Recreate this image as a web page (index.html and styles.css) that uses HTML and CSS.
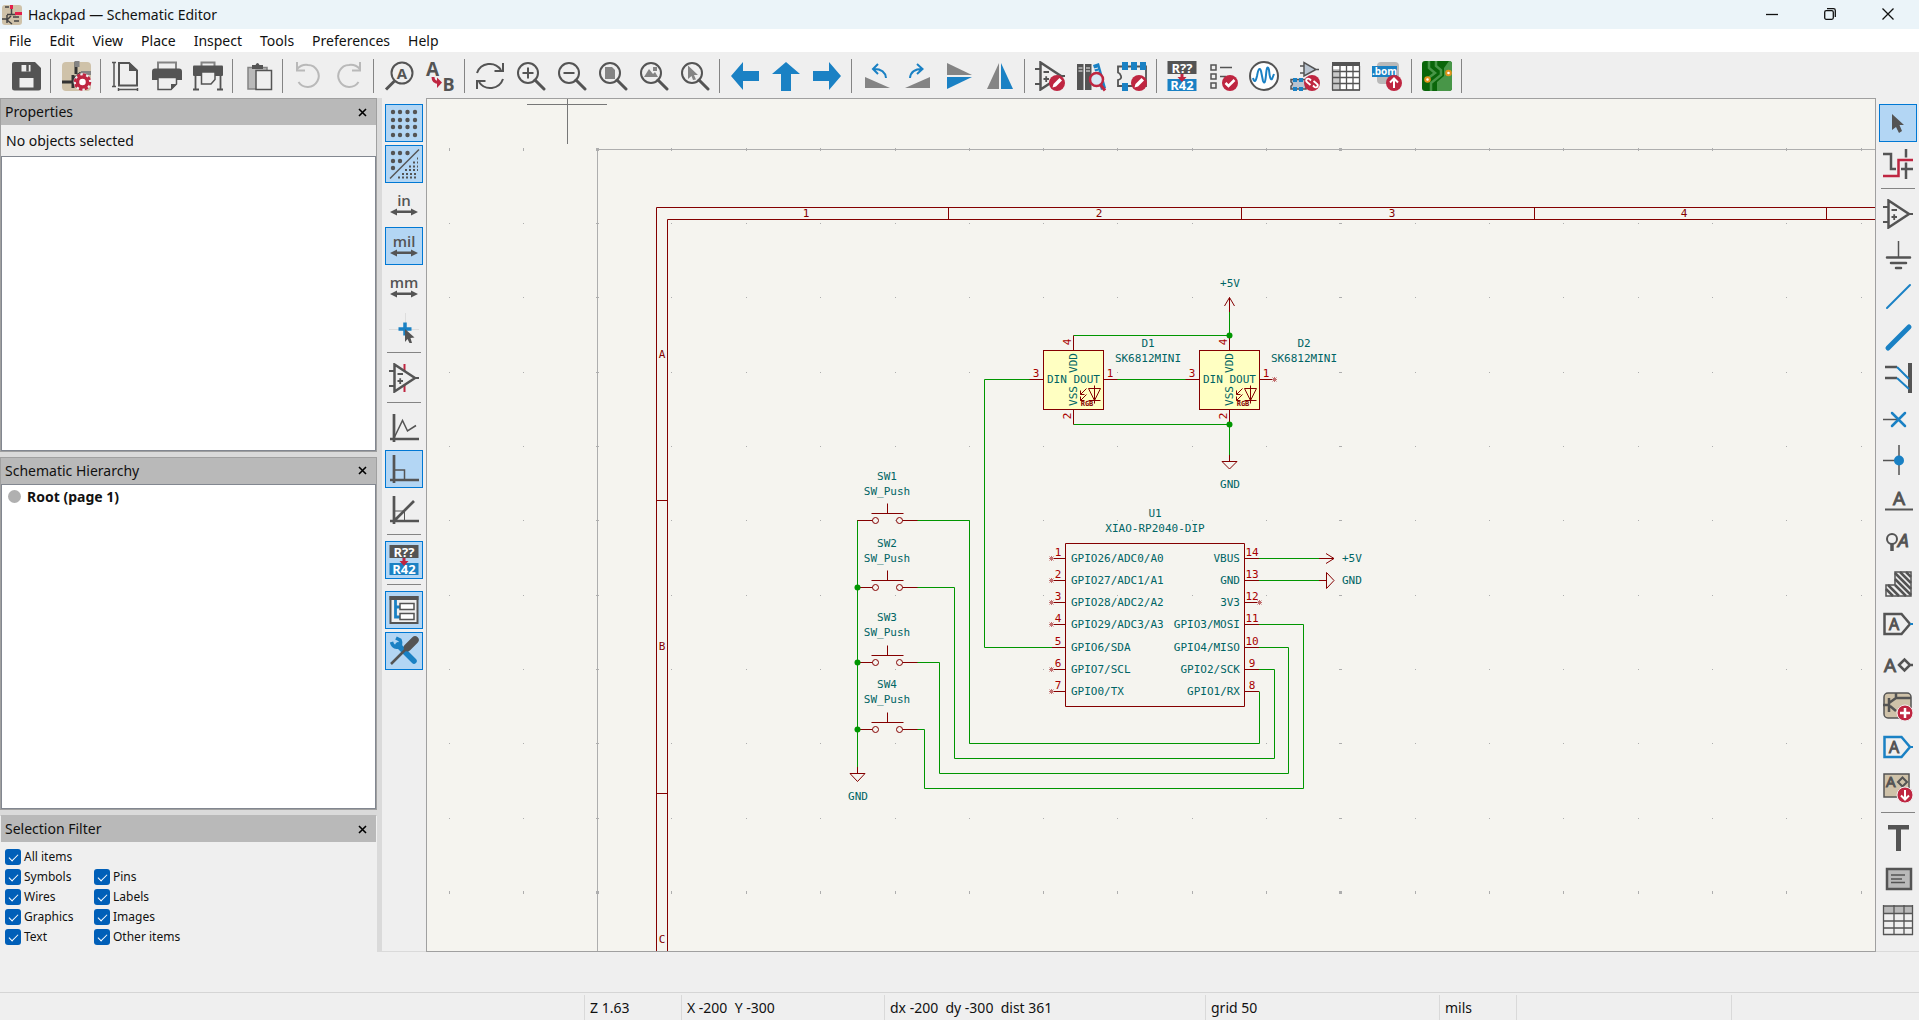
FILE: index.html
```html
<!DOCTYPE html>
<html lang="en">
<head>
<meta charset="utf-8">
<title>Hackpad — Schematic Editor</title>
<link rel="stylesheet" href="styles.css">
</head>
<body>
<svg class="sprite" aria-hidden="true">
  <symbol id="lens" viewBox="0 0 30 30"><circle cx="12" cy="12" r="10"/><path d="M19 19L28 28" stroke-width="3" stroke-linecap="round"/></symbol>
  <symbol id="opamp" viewBox="0 0 30 30"><path d="M5.500 1.500V28.500L26 15Z" stroke-width="2.500"/><path d="M0 8H5M0 23H5M26 15H30M8.500 11H14M8.500 18H14M11.200 15.200V21" stroke-width="1.800"/></symbol>
  <symbol id="pencil" viewBox="0 0 30 30"><circle class="fr" cx="22" cy="22" r="8"/><path class="w" d="M17.500 26.500l1-3.500 6-6 2.500 2.500-6 6Z"/></symbol>
  <symbol id="arrows" viewBox="0 0 30 30"><path class="f" d="M1 22L8 18.500v2h14v-2l7 3.500L22 25.500v-2.500H8V25.500Z"/></symbol>
  <symbol id="flag" viewBox="0 0 30 30"><path d="M1.500 5H18.500L27 15L18.500 25H1.500Z" stroke-width="2.500"/></symbol>
</svg>
<div class="window">
  <header class="titlebar">
    <svg class="appicon" viewBox="0 0 20 20"><rect width="20" height="20" rx="3" fill="#cfc2a9"/><path d="M9.500 4v5M5 9.500h9M5 10v8M0 14h5M9 11l-4 4 5 4" stroke="#444" stroke-width="1.500" fill="none"/><path d="M3 2h4M11 12h6M12 16h5" stroke="#444" stroke-width="1.500"/><path d="M9.500 0v4M13 8.500h7" stroke="#e3204b" stroke-width="3"/></svg>
    <h1 class="title">Hackpad — Schematic Editor</h1>
    <div class="winbtns">
      <button aria-label="Minimize"><svg viewBox="0 0 12 12"><path d="M0 6.500H12"/></svg></button>
      <button aria-label="Restore"><svg viewBox="0 0 12 12"><path d="M3 .700H9.500Q11.300.700 11.300 2.500V9"/><rect x=".700" y="2.700" width="8.600" height="8.600" rx="1.500"/></svg></button>
      <button aria-label="Close"><svg viewBox="0 0 12 12"><path d="M.500.500l11 11M11.500.500l-11 11"/></svg></button>
    </div>
  </header>
  <nav class="menubar">
    <button>File</button><button>Edit</button><button>View</button><button>Place</button><button>Inspect</button><button>Tools</button><button>Preferences</button><button>Help</button>
  </nav>
  <div class="toolbar" role="toolbar">
    <button class="tool" aria-label="Save"><svg class="icon" viewBox="0 0 30 30"><path class="f" d="M3 1H24L30 7V27Q30 29.500 27.500 29.500H3.500Q1 29.500 1 27V3Q1 1 3 1Z"/><rect x="7.500" y="16" width="16" height="11.500" fill="#efefef"/><rect x="9.500" y="3" width="11" height="8.500" fill="#efefef"/><path d="M16.500 4v6.500" stroke-width="2.500"/></svg></button>
    <span class="sep"></span>
    <button class="tool" aria-label="Schematic setup"><svg class="icon" viewBox="0 0 30 30"><rect x="1" y="1" width="29" height="29" rx="4" fill="#cfc2a9" stroke="none"/><path d="M15 1v12M1 21h12M12 14v13M13 18l7-6" stroke-width="3" stroke="#333"/><path d="M20 12h10" stroke-width="4" stroke="#848484"/><path d="M16 0v6" stroke-width="5" stroke="#848484"/><circle cx="21.500" cy="21" r="6.500" stroke="#efefef" stroke-width="5"/><circle cx="21.500" cy="21" r="7.500" stroke="#bf2641" stroke-width="2.500" stroke-dasharray="3.500 2.390"/><circle cx="21.500" cy="21" r="5" stroke="#bf2641" stroke-width="3.500" fill="#fff"/></svg></button>
    <span class="sep"></span>
    <button class="tool" aria-label="Page settings"><svg class="icon" viewBox="0 0 30 30"><path d="M8 2H18L26 9.500V24.500H8Z"/><path d="M18 1V10H27Z" class="f"/><path d="M3 2V25M1 1.500H5M1 25.500H5M8 28.500H26M7.500 27V30M26.500 27V30" stroke-width="1.500"/></svg></button>
    <button class="tool" aria-label="Print"><svg class="icon" viewBox="0 0 30 30"><path d="M6 8V1.500H24V8" stroke="#848484"/><path class="f" d="M3 7.500H27Q30 7.500 30 10.500V19H0V10.500Q0 7.500 3 7.500Z"/><path d="M6 16.500H24.500V23L19 28.500H6Z" fill="#efefef" stroke-width="1.500"/><path class="f" d="M19 29V23H25Z"/></svg></button>
    <button class="tool" aria-label="Plot"><svg class="icon" viewBox="0 0 30 30"><path d="M8.500 5V1.500H21.500V5" stroke="#848484"/><rect class="f" y="4.500" width="30" height="10.500" rx="1"/><path d="M8.500 11H22V18.500L18 23H8.500Z" fill="#efefef" stroke-width="1.500"/><path d="M2.500 14V28M27.500 14V28M0 28.500H6M24 28.500H30" stroke-width="1.800"/></svg></button>
    <span class="sep"></span>
    <button class="tool" aria-label="Paste"><svg class="icon" viewBox="0 0 30 30"><path d="M5 6.500H24V28H5Z" fill="#b9b9b9" stroke="#848484" stroke-width="1.500"/><path class="f" d="M9 8V4H12.500Q14.500 0 16.500 4H20V8Z"/><path d="M13 9.500H28.500V28.500H13Z" fill="#efefef" stroke-width="1.500"/></svg></button>
    <span class="sep"></span>
    <button class="tool" aria-label="Undo"><svg class="icon dim" viewBox="0 0 30 30"><path d="M4 1V9.500H12M4 8Q9 3 15 4A11 11 0 1 1 5.500 21"/></svg></button>
    <button class="tool" aria-label="Redo"><svg class="icon dim" viewBox="0 0 30 30"><path d="M26 1V9.500H18M26 8Q21 3 15 4A11 11 0 1 0 24.500 21"/></svg></button>
    <span class="sep"></span>
    <button class="tool" aria-label="Find"><svg class="icon" viewBox="0 0 30 30"><circle cx="18" cy="12" r="10.500"/><path d="M10.500 20L2 28.500" stroke-width="3"/><text class="ft" x="18" y="17.500" font-size="15" text-anchor="middle">A</text></svg></button>
    <button class="tool" aria-label="Find and replace"><svg class="icon" viewBox="0 0 30 30"><text class="ft" x="1" y="15" font-size="19">A</text><text class="ft" x="17.500" y="29.500" font-size="18">B</text><path d="M8 16Q8 21.500 14 21.500" stroke="#bf2641" stroke-width="3"/><path class="fr" d="M12 16.500L17 21.500L12 27Z"/></svg></button>
    <span class="sep"></span>
    <button class="tool" aria-label="Refresh"><svg class="icon" viewBox="0 0 30 30"><path d="M2 12A13.500 13.500 0 0 1 26 9M28 2V10H19.500M28 18A13.500 13.500 0 0 1 4 21M2 28V20H10.500"/></svg></button>
    <button class="tool" aria-label="Zoom in"><svg class="icon" viewBox="0 0 30 30"><use href="#lens"/><path d="M12 6.500V17.500M6.500 12H17.500"/></svg></button>
    <button class="tool" aria-label="Zoom out"><svg class="icon" viewBox="0 0 30 30"><use href="#lens"/><path d="M6.500 12H17.500"/></svg></button>
    <button class="tool" aria-label="Zoom to fit"><svg class="icon" viewBox="0 0 30 30"><use href="#lens"/><path class="fg" d="M7 6H14L17 9V18H7Z"/></svg></button>
    <button class="tool" aria-label="Zoom to objects"><svg class="icon" viewBox="0 0 30 30"><use href="#lens"/><path class="fg" d="M5 16L10 8L14 13L16 11L19 16ZM14 6h4v4h-4Z"/></svg></button>
    <button class="tool" aria-label="Zoom to selection"><svg class="icon" viewBox="0 0 30 30"><use href="#lens"/><path class="fg" d="M8 4.500L18 14H14L16 18.500L13 19L11.500 15L8 18Z"/></svg></button>
    <span class="sep"></span>
    <button class="tool" aria-label="Back"><svg class="icon" viewBox="0 0 30 30"><path class="fb" d="M1 15L13 1V10H29V20H13V29Z"/></svg></button>
    <button class="tool" aria-label="Up"><svg class="icon" viewBox="0 0 30 30"><path class="fb" d="M15 1L29 13H20V30H10V13H1Z"/></svg></button>
    <button class="tool" aria-label="Forward"><svg class="icon" viewBox="0 0 30 30"><path class="fb" d="M29 15L17 1V10H1V20H17V29Z"/></svg></button>
    <span class="sep"></span>
    <button class="tool" aria-label="Rotate left"><svg class="icon" viewBox="0 0 30 30"><path class="fg" d="M3 16L28 27H3Z"/><path class="sb" d="M24 17Q23 8 12 8M16 3L11 8L16 13"/></svg></button>
    <button class="tool" aria-label="Rotate right"><svg class="icon" viewBox="0 0 30 30"><path class="fg" d="M27 16L2 27H27Z"/><path class="sb" d="M7 17Q8 8 19 8M14 3L19.500 8L14 13"/></svg></button>
    <button class="tool" aria-label="Mirror vertically"><svg class="icon" viewBox="0 0 30 30"><path class="fg" d="M3 2L28 14H3Z"/><path class="fb" d="M3 28L28 16H3Z"/></svg></button>
    <button class="tool" aria-label="Mirror horizontally"><svg class="icon" viewBox="0 0 30 30"><path class="fg" d="M2 28L14 2V28Z"/><path class="fb" d="M28 28L16 2V28Z"/></svg></button>
    <span class="sep"></span>
    <button class="tool" aria-label="Symbol editor"><svg class="icon" viewBox="0 0 30 30"><use href="#opamp"/><use href="#pencil"/></svg></button>
    <button class="tool" aria-label="Symbol library browser"><svg class="icon" viewBox="0 0 30 30"><path class="f" d="M1 3H7.500V29H1ZM9 3H15.500V29H9Z"/><path d="M2.500 7h4M2.500 10h4M10 7h4M10 10h4" stroke="#efefef" stroke-width="1"/><path class="fb" d="M17 4L23 2L30 27L25 29Z"/><path d="M18 8l4-1M19 11l4-1" stroke="#efefef" stroke-width="1"/><path d="M24 23L29 29.500" stroke="#bf2641" stroke-width="3"/><circle cx="20.500" cy="18.500" r="6.500" stroke="#bf2641" stroke-width="2.500" fill="#d8e8f4"/></svg></button>
    <button class="tool" aria-label="Footprint editor"><svg class="icon" viewBox="0 0 30 30"><path d="M1 5.500H29V25H1V19Q5 18 4 15Q3 12 1 11.500Z" stroke-width="1.800"/><path class="fb" d="M5 1h6v8H5ZM14 1h6v8h-6ZM23 1h6v8h-6ZM5 22h6v8H5Z"/><use href="#pencil"/></svg></button>
    <span class="sep"></span>
    <button class="tool" aria-label="Annotate"><svg class="icon" viewBox="0 0 30 30"><rect class="f" width="29" height="13" x="0.500"/><rect class="fb" x="0.500" y="18" width="29" height="12"/><text class="w" x="15" y="11.500" font-size="13" text-anchor="middle">R??</text><text class="w" x="15" y="29" font-size="13" text-anchor="middle">R42</text><path class="fr" d="M13.500 13h3v3h3L15 21L10.500 16h3Z"/></svg></button>
    <button class="tool" aria-label="Rules checker"><svg class="icon" viewBox="0 0 30 30"><path d="M3 4h5v5H3ZM3 13h5v5H3ZM3 22h5v5H3ZM12 6.500H24M12 15.500H18" stroke-width="1.500"/><circle class="fr" cx="22" cy="22" r="8"/><path d="M17.500 22l3 3 6-6" stroke="#fff" stroke-width="2.500"/></svg></button>
    <button class="tool" aria-label="Simulator"><svg class="icon" viewBox="0 0 30 30"><circle cx="15" cy="15" r="14" fill="#fff"/><path class="sb" d="M4 17Q6 24 8 15Q10 4 12 10L14 20Q16 25 17 14Q18 2 20 9Q21 20 23 18L25 13" /></svg></button>
    <button class="tool" aria-label="Assign footprints"><svg class="icon" viewBox="0 0 30 30"><path d="M14 1.500V15L26 8.500ZM10 5H14M10 12H14M26 8.500H29" fill="#b9c4d0" stroke-width="1.500"/><path d="M1 18.500H16V28H1V25Q4 23 1 21Z" fill="#b9c4d0" stroke-width="1.500"/><path class="fb" d="M3 17h4v4H3ZM9 17h4v4H9ZM3 26h4v4H3ZM9 26h4v4H9Z"/><circle class="fr" cx="22" cy="22" r="8"/><path d="M21 19.500l-1.500-1.500q-2-1-3 .500t1 3l3 2.500M23 24.500l1.500 1.500q2 1 3-.500t-1-3l-3-2.500" stroke="#fff" stroke-width="1.800"/></svg></button>
    <button class="tool" aria-label="Symbol fields table"><svg class="icon" viewBox="0 0 30 30"><rect x="1.500" y="2" width="27" height="27" fill="#fff" stroke-width="1"/><path d="M2 8V29H9V8Z" fill="#c9c9c9" stroke="none"/><path class="f" d="M1 1H29V5H1Z"/><path d="M1 10.500H29M1 16.500H29M1 22.500H29M1.500 5V29M9 5V29M15.500 5V29M22 5V29M28.500 5V29M1 29H29" stroke-width="1.300"/></svg></button>
    <button class="tool" aria-label="Bill of materials"><svg class="icon" viewBox="0 0 30 30"><rect x="5" y="1" width="22" height="22" rx="4" fill="#b9b9b9" stroke="none"/><rect class="fb" y="5" width="25" height="11"/><text class="w" x="12.500" y="13.500" font-size="10" text-anchor="middle">.bom</text><circle class="fr" cx="22" cy="22" r="8"/><path d="M22 27V18M18 21.500L22 17.500L26 21.500" stroke="#fff"/></svg></button>
    <span class="sep"></span>
    <button class="tool" aria-label="Switch to PCB editor"><svg class="icon" viewBox="0 0 30 30"><rect width="30" height="30" rx="3" fill="#0a660a" stroke="none"/><path d="M15 30V21L22 15V7L27 0H27Q30 0 30 3V27Q30 30 27 30Z" fill="#489648" stroke="none"/><path d="M7 0V7L13 12L5 18M14 0V5L19 9V14L9 22V30" stroke="#489648" stroke-width="2.500"/><circle cx="26.500" cy="12" r="2.300" fill="#fff" stroke="#e3941b"/><circle cx="5.500" cy="18.500" r="2.300" fill="#fff" stroke="#e3941b"/></svg></button>
    <span class="sep"></span>
  </div>
  <main class="main">
    <aside class="panels">
      <section class="panel panel-props">
        <header class="phead"><h2>Properties</h2><button aria-label="Close Properties"><svg viewBox="0 0 9 9"><path d="M1 1l7 7M8 1l-7 7"/></svg></button></header>
        <p class="note">No objects selected</p>
        <div class="list"></div>
      </section>
      <section class="panel panel-tree">
        <header class="phead"><h2>Schematic Hierarchy</h2><button aria-label="Close Schematic Hierarchy"><svg viewBox="0 0 9 9"><path d="M1 1l7 7M8 1l-7 7"/></svg></button></header>
        <div class="list"><div class="node"><span class="dot"></span>Root (page 1)</div></div>
      </section>
      <section class="panel panel-filter">
        <header class="phead"><h2>Selection Filter</h2><button aria-label="Close Selection Filter"><svg viewBox="0 0 9 9"><path d="M1 1l7 7M8 1l-7 7"/></svg></button></header>
        <div class="filters">
          <label class="all"><input type="checkbox" checked>All items</label>
          <label><input type="checkbox" checked>Symbols</label><label><input type="checkbox" checked>Pins</label>
          <label><input type="checkbox" checked>Wires</label><label><input type="checkbox" checked>Labels</label>
          <label><input type="checkbox" checked>Graphics</label><label><input type="checkbox" checked>Images</label>
          <label><input type="checkbox" checked>Text</label><label><input type="checkbox" checked>Other items</label>
        </div>
      </section>
    </aside>
    <div class="sidebar" role="toolbar">
      <button class="tool on" aria-label="Show grid"><svg class="icon" viewBox="0 0 30 30"><path d="M4 4h.01M11 4h.01M18.500 4h.01M26 4h.01M4 12h.01M11 12h.01M18.500 12h.01M26 12h.01M4 19h.01M11 19h.01M18.500 19h.01M26 19h.01M4 27h.01M11 27h.01M18.500 27h.01M26 27h.01" stroke-width="4.400" stroke-linecap="round"/></svg></button>
      <button class="tool on" aria-label="Grid overrides"><svg class="icon" viewBox="0 0 30 30"><path d="M4 4h.01M11 4h.01M18.500 4h.01M4 12h.01M11 12h.01M4 19h.01" stroke-width="4.400" stroke-linecap="round"/><path d="M1 29.500L30 .500" stroke-width="1.500"/><path d="M28 9.500h1M24 13.500h5M20 17.500h9M16 21h13M13 25h16M9 28.500h20" stroke-width="2" stroke-dasharray="2 2"/></svg></button>
      <button class="tool" aria-label="Inches"><svg class="icon" viewBox="0 0 30 30"><text class="ft unit" x="15" y="16" font-size="15" text-anchor="middle">in</text><use href="#arrows"/></svg></button>
      <button class="tool on" aria-label="Mils"><svg class="icon" viewBox="0 0 30 30"><text class="ft unit" x="15" y="16" font-size="15" text-anchor="middle">mil</text><use href="#arrows"/></svg></button>
      <button class="tool" aria-label="Millimeters"><svg class="icon" viewBox="0 0 30 30"><text class="ft unit" x="15" y="16" font-size="15" text-anchor="middle">mm</text><use href="#arrows"/></svg></button>
      <button class="tool" aria-label="Full-window crosshairs"><svg class="icon" viewBox="0 0 30 30"><path d="M0 16.500H30M16.500 0V16" stroke="#ddd" stroke-width="1"/><path class="sb" d="M16 9.500V22.500M9.500 16H22.500" stroke-width="3.500"/><path class="f" d="M16 16L25.500 24.500L21.500 25L23 30H20.500L18.500 26L16 29Z"/></svg></button>
      <span class="sep"></span>
      <button class="tool" aria-label="Hidden pins"><svg class="icon" viewBox="0 0 30 30"><path d="M15.500 1V8M15.500 22V29" stroke="#bf2641"/><use href="#opamp"/></svg></button>
      <span class="sep"></span>
      <button class="tool" aria-label="Free angle"><svg class="icon" viewBox="0 0 30 30"><path d="M5 1V29M1 26H30" stroke-width="2.700"/><path d="M5.500 24L13.500 7.500L18.500 18L27 12.500" stroke-width="1.500"/></svg></button>
      <button class="tool on" aria-label="90 degree mode"><svg class="icon" viewBox="0 0 30 30"><path d="M5 1V29M1 26H30" stroke-width="2.700"/><path d="M6 16H15.500V25" stroke-width="1.500"/></svg></button>
      <button class="tool" aria-label="45 degree mode"><svg class="icon" viewBox="0 0 30 30"><path d="M5 1V29M1 26H30M5 26L25 6" stroke-width="2.700"/><path d="M6 16H15.500V25" stroke-width="1"/></svg></button>
      <span class="sep"></span>
      <button class="tool on" aria-label="Annotate automatically"><svg class="icon" viewBox="0 0 30 30"><rect class="f" width="29" height="13" x="0.500"/><rect class="fb" x="0.500" y="18" width="29" height="12"/><text class="w" x="15" y="11.500" font-size="13" text-anchor="middle">R??</text><text class="w" x="15" y="29" font-size="13" text-anchor="middle">R42</text><path class="fr" d="M13.500 13h3v3h3L15 21L10.500 16h3Z"/></svg></button>
      <span class="sep"></span>
      <button class="tool on" aria-label="Hierarchy navigator"><svg class="icon" viewBox="0 0 30 30"><rect x="1.500" y="2" width="27" height="26" fill="#efefef"/><path class="f" d="M.500 1H29.500V5H.500Z"/><path class="sb" d="M6.500 5V22H11M6.500 12H11" stroke-width="2.800"/><path d="M11 8.500H25V14.500H11ZM11 18.500H25V24.500H11Z" stroke-width="1.500" fill="#fff"/></svg></button>
      <button class="tool on" aria-label="Properties manager"><svg class="icon" viewBox="0 0 30 30"><path class="sb" d="M9 9L25 25" stroke-width="5.500" stroke-linecap="round"/><path class="sb" d="M2.500 6Q4 12 9 11Q13 9 11 4L7 2" stroke-width="3.500"/><path d="M2 28L21 9" stroke-width="2.500"/><path d="M18.500 11.500L26 4" stroke-width="7.500" stroke-linecap="round"/></svg></button>
    </div>
    <div class="canvas">
      <svg class="sheet" role="img" aria-label="Schematic">
        <defs>
          <path id="row" d="M449 0h1M523 0h1M596 0h3M671 0h1M746 0h1M820 0h1M895 0h1M969 0h1M1043 0h1M1117 0h1M1192 0h1M1266 0h1M1339 0h3M1415 0h1M1489 0h1M1563 0h1M1638 0h1M1712 0h1M1786 0h1M1861 0h1"/>
          <path id="open" d="M-2 -2L2 2M2 -2L-2 2M-2.500 0H2.500M0 -2.500V2.500"/>
          <g id="button">
            <path class="sym" d="M0 0H15M45 0H60M14 -7H46M30 -17V-7"/><circle class="sym" cx="18" cy="0" r="3"/><circle class="sym" cx="42" cy="0" r="3"/>
          </g>
          <g id="led">
            <rect class="body" x="-30" y="-29" width="60" height="59"/>
            <path class="sym" d="M0 -44V-29M0 30V45M-44 0H-30M30 0H44"/>
            <path class="sym" d="M15 9H27L21 21ZM15 21H27M21 6V24M13 9L7 15M7 11V15H11M13 15L7 21M7 17V21H11"/>
          </g>
        </defs>
        <g transform="translate(-427 -99)">
          <g class="grid">
            <use href="#row" y="223.500"/><use href="#row" y="297.500"/><use href="#row" y="372.500"/><use href="#row" y="446.500"/><use href="#row" y="520.500"/><use href="#row" y="595.500"/><use href="#row" y="669.500"/><use href="#row" y="743.500"/><use href="#row" y="818.500"/>
            <use href="#row" class="major" y="149.500"/><use href="#row" class="major" y="892.500"/>
            <path d="M597.500 2000V149.500H4000"/>
          </g>
          <path class="cross" d="M527 104.500H607M567.500 99V144"/>
          <path class="sym" d="M656.500 2000V207.500H4000M667.500 2000V219.500H4000M948.500 207V219M1241.500 207V219M1534.500 207V219M1826.500 207V219M656 500.500H667M656 793.500H667"/>
          <g class="frame mid"><text x="806" y="217">1</text><text x="1099" y="217">2</text><text x="1392" y="217">3</text><text x="1684" y="217">4</text><text x="662" y="358">A</text><text x="662" y="650">B</text><text x="662" y="943">C</text></g>
          <path class="wire" d="M1073.500 335.500H1229.500V311M1073.500 424.500H1229.500V456M1117 379.500H1186M1030 379.500H984.500V647.500H1052M917 520.500H969.500V743.500H1259.500V691.500M917 587.500H954.500V758.500H1274.500V669.500H1259M917 662.500H939.500V773.500H1288.500V647.500H1259M917 729.500H924.500V788.500H1303.500V624.500H1259M857.500 520V768M1259 558.500H1320M1259 580.500H1320"/>
          <use href="#led" x="1073.500" y="379.500"/><use href="#led" x="1229.500" y="379.500"/>
          <g transform="translate(1073 379)">
            <text class="net" x="-26" y="4">DIN</text><text class="net end" x="27" y="4">DOUT</text>
            <text class="net mid" transform="translate(4 -16) rotate(-90)">VDD</text><text class="net mid" transform="translate(4 17) rotate(-90)">VSS</text>
            <text class="rgb mid" x="14" y="27">RGB</text>
            <text class="pin mid" transform="translate(-2 -37) rotate(-90)">4</text><text class="pin mid" transform="translate(-2 37) rotate(-90)">2</text>
            <text class="pin mid" x="-37" y="-2">3</text><text class="pin mid" x="37" y="-2">1</text>
          </g>
          <g transform="translate(1229 379)">
            <text class="net" x="-26" y="4">DIN</text><text class="net end" x="27" y="4">DOUT</text>
            <text class="net mid" transform="translate(4 -16) rotate(-90)">VDD</text><text class="net mid" transform="translate(4 17) rotate(-90)">VSS</text>
            <text class="rgb mid" x="14" y="27">RGB</text>
            <text class="pin mid" transform="translate(-2 -37) rotate(-90)">4</text><text class="pin mid" transform="translate(-2 37) rotate(-90)">2</text>
            <text class="pin mid" x="-37" y="-2">3</text><text class="pin mid" x="37" y="-2">1</text>
          </g>
          <use href="#button" x="857.500" y="520.500"/><use href="#button" x="857.500" y="587.500"/><use href="#button" x="857.500" y="662.500"/><use href="#button" x="857.500" y="729.500"/>
          <g class="node-dots"><circle cx="857.500" cy="587.500" r="3"/><circle cx="857.500" cy="662.500" r="3"/><circle cx="857.500" cy="729.500" r="3"/><circle cx="1229.500" cy="335.500" r="3"/><circle cx="1229.500" cy="424.500" r="3"/></g>
          <path class="sym" d="M1229.500 312V297.500M1224.500 306L1229.500 297.500L1234.500 306M1229.500 455V461.500M1222 461.500H1237L1229.500 469ZM857.500 767V773.500M850 773.500H865L857.500 781.500ZM1319 558.500H1334M1326 553.500L1334 558.500L1326 563.500M1319 580.500H1326.500M1326.500 572.500V588.500L1334 580.500Z"/>
          <g class="net mid">
            <text x="1230" y="287">+5V</text><text x="1230" y="488">GND</text><text x="858" y="800">GND</text>
            <text x="1148" y="347">D1</text><text x="1148" y="362">SK6812MINI</text><text x="1304" y="347">D2</text><text x="1304" y="362">SK6812MINI</text>
            <text x="887" y="480">SW1</text><text x="887" y="495">SW_Push</text><text x="887" y="547">SW2</text><text x="887" y="562">SW_Push</text><text x="887" y="621">SW3</text><text x="887" y="636">SW_Push</text><text x="887" y="688">SW4</text><text x="887" y="703">SW_Push</text>
            <text x="1155" y="517">U1</text><text x="1155" y="532">XIAO-RP2040-DIP</text>
          </g>
          <path class="sym" d="M1065.500 543.500H1244.500V706.500H1065.500ZM1052 558.500H1065M1052 580.500H1065M1052 602.500H1065M1052 624.500H1065M1052 647.500H1065M1052 669.500H1065M1052 691.500H1065M1245 558.500H1259M1245 580.500H1259M1245 602.500H1259M1245 624.500H1259M1245 647.500H1259M1245 669.500H1259M1245 691.500H1259"/>
          <g class="ends"><use href="#open" x="1051.500" y="558.500"/><use href="#open" x="1051.500" y="580.500"/><use href="#open" x="1051.500" y="602.500"/><use href="#open" x="1051.500" y="624.500"/><use href="#open" x="1051.500" y="669.500"/><use href="#open" x="1051.500" y="691.500"/><use href="#open" x="1259.500" y="602.500"/><use href="#open" x="1274.500" y="379.500"/></g>
          <g class="pin mid"><text x="1058" y="556">1</text><text x="1058" y="578">2</text><text x="1058" y="600">3</text><text x="1058" y="622">4</text><text x="1058" y="645">5</text><text x="1058" y="667">6</text><text x="1058" y="689">7</text><text x="1252" y="556">14</text><text x="1252" y="578">13</text><text x="1252" y="600">12</text><text x="1252" y="622">11</text><text x="1252" y="645">10</text><text x="1252" y="667">9</text><text x="1252" y="689">8</text></g>
          <g class="net"><text x="1071" y="562">GPIO26/ADC0/A0</text><text x="1071" y="584">GPIO27/ADC1/A1</text><text x="1071" y="606">GPIO28/ADC2/A2</text><text x="1071" y="628">GPIO29/ADC3/A3</text><text x="1071" y="651">GPIO6/SDA</text><text x="1071" y="673">GPIO7/SCL</text><text x="1071" y="695">GPIO0/TX</text><text x="1342" y="562">+5V</text><text x="1342" y="584">GND</text></g>
          <g class="net end"><text x="1240" y="562">VBUS</text><text x="1240" y="584">GND</text><text x="1240" y="606">3V3</text><text x="1240" y="628">GPIO3/MOSI</text><text x="1240" y="651">GPIO4/MISO</text><text x="1240" y="673">GPIO2/SCK</text><text x="1240" y="695">GPIO1/RX</text></g>
        </g>
      </svg>
    </div>
    <div class="sidebar" role="toolbar">
      <button class="tool on" aria-label="Select"><svg class="icon" viewBox="0 0 30 30"><path class="f" d="M9 6L21 17H16.500L19 23L16 25L13 19L9 22Z"/></svg></button>
      <button class="tool" aria-label="Highlight net"><svg class="icon" viewBox="0 0 30 30"><path d="M0 5H8V20H13M18 20H30M23 0V30" stroke-width="2.500"/><path d="M0 27H15.500V11H30" stroke="#efefef" stroke-width="5"/><path d="M0 27H15.500V11H30" stroke="#bf2641" stroke-width="2.500"/></svg></button>
      <span class="sep"></span>
      <button class="tool" aria-label="Place symbols"><svg class="icon" viewBox="0 0 30 30"><use href="#opamp"/></svg></button>
      <button class="tool" aria-label="Place power"><svg class="icon" viewBox="0 0 30 30"><path d="M15.500 1V17" stroke-width="1.500"/><path d="M4 17.500H27M8 23H23M13 28H18" stroke-width="2.500" stroke-linecap="round"/></svg></button>
      <button class="tool" aria-label="Draw wires"><svg class="icon" viewBox="0 0 30 30"><path class="sb" d="M4 27L27 4" stroke-linecap="round"/></svg></button>
      <button class="tool" aria-label="Draw buses"><svg class="icon" viewBox="0 0 30 30"><path class="thick" d="M5 26L26 5" stroke-linecap="round"/></svg></button>
      <button class="tool" aria-label="Bus entries"><svg class="icon" viewBox="0 0 30 30"><path d="M27 0V30" stroke-width="4"/><path d="M2 4H14M2 15H14" stroke-width="2.500"/><path class="sb" d="M14 4L26 16M14 15L26 26"/></svg></button>
      <button class="tool" aria-label="No-connect flags"><svg class="icon" viewBox="0 0 30 30"><path d="M0 15.500H15" stroke-width="1.500"/><path class="sb" d="M9 9L22 22M22 9L9 22" stroke-width="2.500" stroke-linecap="round"/></svg></button>
      <button class="tool" aria-label="Junctions"><svg class="icon" viewBox="0 0 30 30"><path d="M0 15.500H16M16 0V30" stroke-width="1.500"/><circle class="fb" cx="16" cy="15.500" r="5"/></svg></button>
      <button class="tool" aria-label="Net labels"><svg class="icon" viewBox="0 0 30 30"><text class="ft thin" x="16" y="19" font-size="19" text-anchor="middle">A</text><path d="M2 23.500H30" stroke-width="2"/></svg></button>
      <button class="tool" aria-label="Net class directives"><svg class="icon" viewBox="0 0 30 30"><circle cx="9" cy="12" r="5"/><path d="M9 17V24" stroke-width="3.500"/><text class="ft thin" x="15" y="20" font-size="19" font-style="italic">A</text></svg></button>
      <button class="tool" aria-label="Rule areas"><svg class="icon" viewBox="0 0 30 30"><path d="M3 28V17H12V4H28V28Z" stroke-width="1.500"/><path d="M3 21L10 28M5 17L16 28M12 17L23 28M12 11L28 27M12 5L28 21M17 4L28 15M23 4L28 9" stroke-width="2.500"/></svg></button>
      <button class="tool" aria-label="Global labels"><svg class="icon" viewBox="0 0 30 30"><use href="#flag"/><text class="ft thin" x="11" y="21" font-size="16" text-anchor="middle">A</text><path class="sb" d="M27 15H30"/></svg></button>
      <button class="tool" aria-label="Hierarchical labels"><svg class="icon" viewBox="0 0 30 30"><text class="ft thin" x="1" y="22" font-size="19">A</text><path d="M16 15L21.500 9.500L27 15L21.500 20.500ZM27 15H30" stroke-width="2.500"/></svg></button>
      <button class="tool" aria-label="Hierarchical sheets"><svg class="icon" viewBox="0 0 30 30"><rect x="1" y="2" width="27" height="25" rx="4" fill="#cfc2a9" stroke-width="1.500"/><path d="M13 2V7H28M6 7V21M0 14H6M6 12L13 7M7 15L13 20" stroke-width="2.500"/><circle cx="22" cy="22" r="8" fill="#bf2641" stroke="#efefef" stroke-width="1"/><path d="M22 17V27M17 22H27" stroke="#fff" stroke-width="2.500"/></svg></button>
      <button class="tool" aria-label="Sheet pins"><svg class="icon" viewBox="0 0 30 30"><g class="blue"><use href="#flag"/></g><text class="ft thin" x="11" y="21" font-size="16" text-anchor="middle">A</text><path class="sb" d="M27 15H30"/></svg></button>
      <button class="tool" aria-label="Sync sheet pins"><svg class="icon" viewBox="0 0 30 30"><rect x="1" y="1" width="25" height="23" fill="#cfc2a9" stroke-width="1.500"/><text class="ft thin" x="3" y="14" font-size="15">A</text><path d="M15 9L19.500 4.500L24 9L19.500 13.500Z"/><circle cx="22" cy="22" r="8" fill="#bf2641" stroke="#efefef" stroke-width="1"/><path d="M22 17V26M18 22.500L22 26.500L26 22.500" stroke="#fff"/></svg></button>
      <span class="sep"></span>
      <button class="tool" aria-label="Text"><svg class="icon" viewBox="0 0 30 30"><path class="f" d="M5 2H26V6.500H18V28H13V6.500H5Z"/></svg></button>
      <button class="tool" aria-label="Text boxes"><svg class="icon" viewBox="0 0 30 30"><rect x="4" y="5" width="24" height="20" fill="#b9b9b9" stroke-width="2.500"/><path d="M8 11H22M8 15H19M8 18.500H22" stroke-width="1.500"/></svg></button>
      <button class="tool" aria-label="Tables"><svg class="icon" viewBox="0 0 30 30"><path d="M0 1H30V8H0Z" fill="#b9b9b9" stroke="none"/><path d="M0 1H30M0 8.500H30M0 16H30M0 23H30M0 29.500H30M.500 0V30M11 0V30M21 0V30M29.500 0V30" stroke-width="1.300"/></svg></button>
    </div>
  </main>
  <div class="message"></div>
  <footer class="status"><span></span><span>Z 1.63</span><span>X -200&nbsp; Y -300</span><span>dx -200&nbsp; dy -300&nbsp; dist 361</span><span>grid 50</span><span>mils</span><span></span><span></span></footer>
</div>
</body>
</html>
```
FILE: styles.css
```css
* { box-sizing: border-box; }
body {
  margin: 0;
  background: #efefef;
  color: #111;
  font: 14px/20px "Noto Sans", "Open Sans", sans-serif;
}
h1, h2, p { margin: 0; font-size: 14px; font-weight: 400; }
button { margin: 0; padding: 0; border: 0; background: none; font: inherit; color: inherit; }
.sprite { position: absolute; width: 0; height: 0; }
.window { display: flex; flex-direction: column; height: 100vh; overflow: hidden; }

/* Title and menu */
.titlebar { display: flex; align-items: center; flex: 0 0 29px; padding-left: 2px; background: #ebf4f9; }
.appicon { width: 20px; height: 20px; margin-right: 6px; }
.title { flex: 1; }
.winbtns { display: flex; padding-right: 2px; }
.winbtns button { width: 58px; height: 28px; }
.winbtns svg { width: 12px; height: 12px; fill: none; stroke: #111; stroke-width: 1.3; }
.menubar { display: flex; flex: 0 0 23px; background: #fff; }
.menubar button { padding: 0 9px; }

/* Tool buttons */
.toolbar { display: flex; gap: 3px; flex: 0 0 46px; padding: 5px 7px 3px; }
.sidebar { display: flex; flex-direction: column; gap: 3px; flex: none; padding: 6px 3px; border-bottom: 1px solid #dadada; overflow: hidden; }
.sidebar:last-child { padding: 6px 2px 6px 3px; }
.tool { display: flex; align-items: center; justify-content: center; flex: none; width: 38px; height: 38px; }
.tool.on { background: #b3d6f4; border: 1px solid #0078d4; }
.sep { flex: none; background: #848484; }
.toolbar .sep { width: 1px; margin: 2px 3px 2px 2px; }
.sidebar .sep { height: 1px; margin: 2px 2px 3px; }
.icon { width: 30px; height: 30px; flex: none; fill: none; stroke: #545454; stroke-width: 2; overflow: visible; }
.icon.dim { stroke: #b9b9b9; }
.f { fill: #545454; stroke: none; }
.fb { fill: #1a81c4; stroke: none; }
.fr { fill: #bf2641; stroke: none; }
.fg { fill: #848484; stroke: none; }
.w { fill: #fff; stroke: none; }
.sb { stroke: #1a81c4; }
.thick { stroke: #1a81c4; stroke-width: 5; }
.blue { stroke: #1a81c4; }
.icon text { font-family: "Open Sans", sans-serif; font-weight: 700; }
.ft { fill: #545454; stroke: none; }
.icon text.unit { font-weight: 600; }
.icon text.thin { font-weight: 400; stroke: #545454; stroke-width: 1; }

/* Panels */
.main { display: flex; flex: 1; min-height: 0; }
.panels { display: flex; flex-direction: column; gap: 5px; flex: 0 0 382px; border-right: 5px solid #dadada; background: #dadada; }
.panel { display: flex; flex-direction: column; border: 1px solid #a0a0a0; background: #efefef; }
.panel-props { flex: 354 1 0; }
.panel-tree { flex: 354 1 0; }
.panel-filter { flex: none; border-color: #efefef; border-top-color: #b9b9b9; }
.phead { display: flex; align-items: center; justify-content: space-between; flex: 0 0 26px; padding: 0 9px 0 4px; background: #b9b9b9; }
.phead button { width: 9px; height: 9px; display: flex; }
.phead svg { width: 9px; height: 9px; stroke: #000; stroke-width: 1.6; }
.note { padding: 5px; line-height: 21px; }
.list { flex: 1; border: 1px solid #828790; background: #fff; }
.node { display: flex; align-items: center; gap: 6px; padding: 2px 6px; font-weight: 700; }
.dot { width: 13px; height: 13px; border-radius: 50%; background: #b0b0b0; }
.filters { display: grid; grid-template-columns: 89px 1fr; grid-auto-rows: 20px; padding: 5px 4px 4px; font-size: 12px; }
.filters .all { grid-column: 1 / -1; }
.filters label { display: flex; align-items: center; gap: 3px; white-space: nowrap; }
.filters input { appearance: none; display: flex; align-items: center; justify-content: center; width: 16px; height: 16px; margin: 0; border-radius: 3px; background: #005fb8; }
.filters input:checked::before { content: ""; width: 8px; height: 4px; margin-bottom: 2px; border: solid #fff; border-width: 0 0 1px 1px; transform: rotate(-45deg); }

/* Schematic */
.canvas { flex: 1; min-width: 0; border: 1px solid #a0a0a0; background: #f5f4ef; overflow: hidden; }
.sheet { display: block; width: 100%; height: 100%; fill: none; font: 11px "DejaVu Sans Mono", monospace; }
.grid { stroke: #aeaeae; }
.major { stroke-width: 3; }
.cross { stroke: #777; }
.sym { fill: none; stroke: #840000; }
.wire { stroke: #009600; }
.body { fill: #ffffc2; stroke: #840000; }
.node-dots { fill: #009600; }
.ends { stroke: #c27070; }
.net { fill: #006464; }
.pin { fill: #a90000; }
.frame { fill: #840000; }
.rgb { fill: #840000; font-size: 7px; font-weight: 700; }
.mid { text-anchor: middle; }
.end { text-anchor: end; }

/* Status */
.message { flex: 0 0 40px; }
.status { display: grid; grid-template-columns: 1fr 97px 203px 321px 234px 77px 215px 187px; flex: 0 0 28px; padding-top: 2px; border-top: 1px solid #d5d5d5; white-space: nowrap; }
.status span { padding: 3px 5px 2px; border-right: 1px solid #d9d9d9; }
.status span:last-child { border-right: 0; }
```
